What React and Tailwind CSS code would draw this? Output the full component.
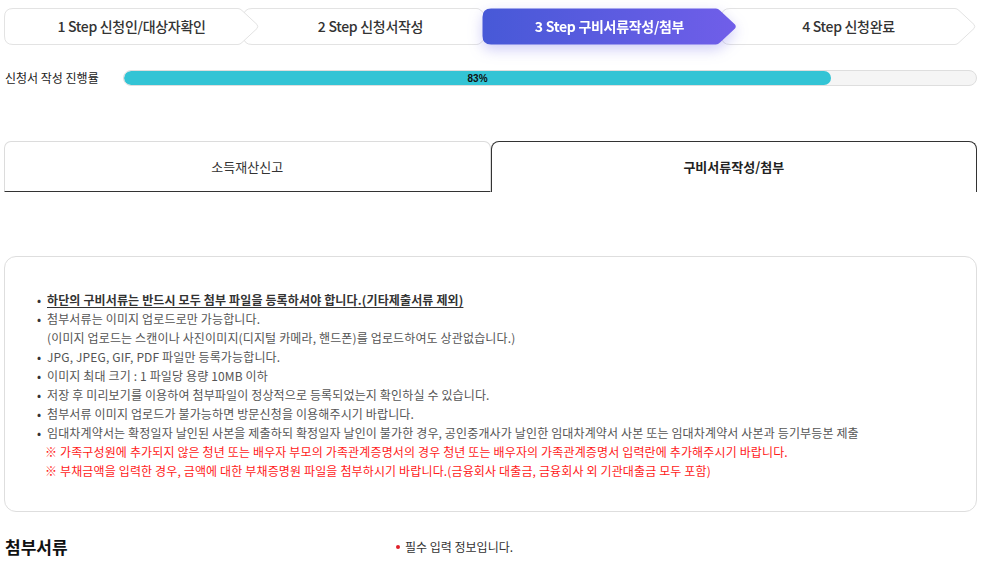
import React from 'react';

const steps = [
  { no: 1, label: '신청인/대상자확인', z: 'z-20' },
  { no: 2, label: '신청서작성', z: 'z-10' },
  { no: 3, label: '구비서류작성/첨부', z: 'z-30', active: true },
  { no: 4, label: '신청완료', z: 'z-0' },
];

const StepShape = ({ active }) => (
  <svg width="255" height="37" viewBox="0 0 255 37" className="absolute inset-0 overflow-visible">
    <defs>
      <linearGradient id="stepGrad" x1="0" y1="0" x2="1" y2="0">
        <stop offset="0%" stopColor="#4759d7" />
        <stop offset="100%" stopColor="#705ee9" />
      </linearGradient>
    </defs>
    <path
      d="M 9 0.5 H 234 Q 236 0.5 238 2.5 L 253 16.5 Q 254.5 18.5 253 20.5 L 238 34.5 Q 236 36.5 234 36.5 H 9 Q 0.5 36.5 0.5 28 V 9 Q 0.5 0.5 9 0.5 Z"
      fill={active ? 'url(#stepGrad)' : '#ffffff'}
      stroke={active ? 'none' : '#e3e3e3'}
      strokeWidth="1"
    />
  </svg>
);

const notes = [
  { text: '하단의 구비서류는 반드시 모두 첨부 파일을 등록하셔야 합니다.(기타제출서류 제외)', strong: true },
  { text: '첨부서류는 이미지 업로드로만 가능합니다.', sub: '(이미지 업로드는 스캔이나 사진이미지(디지털 카메라, 핸드폰)를 업로드하여도 상관없습니다.)' },
  { text: 'JPG, JPEG, GIF, PDF 파일만 등록가능합니다.' },
  { text: '이미지 최대 크기 : 1 파일당 용량 10MB 이하' },
  { text: '저장 후 미리보기를 이용하여 첨부파일이 정상적으로 등록되었는지 확인하실 수 있습니다.' },
  { text: '첨부서류 이미지 업로드가 불가능하면 방문신청을 이용해주시기 바랍니다.' },
  { text: '임대차계약서는 확정일자 날인된 사본을 제출하되 확정일자 날인이 불가한 경우, 공인중개사가 날인한 임대차계약서 사본 또는 임대차계약서 사본과 등기부등본 제출' },
];

const App = () => {
  return (
    <div className="w-[987px] min-h-[569px] bg-white font-['Noto_Sans_CJK_KR','Noto_Sans',sans-serif] text-[#333]">
      {/* steps */}
      <div className="flex pt-[8px] pl-[4px]">
        {steps.map((s, i) => (
          <div key={s.no} className={`relative w-[255px] h-[37px] shrink-0 ${s.z} ${i > 0 ? '-ml-[16px]' : ''} ${s.active ? 'drop-shadow-[0_5px_7px_rgba(95,90,230,0.3)]' : ''}`}>
            <StepShape active={s.active} />
            <div className={`relative flex h-full items-center justify-center text-[14px] tracking-[-0.3px] ${s.active ? 'font-bold text-white' : 'font-medium text-[#333]'}`}>
              {s.no} Step {s.label}
            </div>
          </div>
        ))}
      </div>

      {/* progress */}
      <div className="flex items-center mt-[24px] pl-[5px] pr-[10px]">
        <div className="w-[118px] text-[12px] text-[#222]">신청서 작성 진행률</div>
        <div className="flex-1 h-[16px] rounded-full border border-[#dedede] bg-[#f5f5f5] overflow-hidden">
          <div className="w-[83%] h-full rounded-full bg-[#33c4d5] flex items-center justify-center font-['Liberation_Sans',sans-serif] text-[10px] font-bold text-[#111]">
            83%
          </div>
        </div>
      </div>

      {/* tabs */}
      <div className="flex mt-[54px] px-[4px] pr-[10px] h-[51px]">
        <div className="flex-1 flex items-center justify-center rounded-t-[7px] border-t border-l border-r border-[#dcdcdc] border-b border-b-[#333] text-[13px] text-[#333]">
          소득재산신고
        </div>
        <div className="flex-1 flex items-center justify-center rounded-t-[8px] border-t border-l border-r border-[#333] text-[13px] font-bold text-[#222]">
          구비서류작성/첨부
        </div>
      </div>

      {/* notice box */}
      <div className="mt-[64px] mx-[4px] mr-[10px] rounded-[12px] border border-[#dedede] pt-[33px] pb-[31px] pl-[32px] text-[12px] leading-[19px] tracking-[0.14px] text-[#555]">
        {notes.map((n, i) => (
          <div key={i} className="flex">
            <span className="w-[10px] shrink-0 text-[#333]">•</span>
            <div>
              <div className={n.strong ? 'font-bold text-[#333] underline underline-offset-2' : ''}>{n.text}</div>
              {n.sub && <div>{n.sub}</div>}
            </div>
          </div>
        ))}
        <div className="pl-[8px] text-[#ff1a1a]">※ 가족구성원에 추가되지 않은 청년 또는 배우자 부모의 가족관계증명서의 경우 청년 또는 배우자의 가족관계증명서 입력란에 추가해주시기 바랍니다.</div>
        <div className="pl-[8px] text-[#ff1a1a]">※ 부채금액을 입력한 경우, 금액에 대한 부채증명원 파일을 첨부하시기 바랍니다.(금융회사 대출금, 금융회사 외 기관대출금 모두 포함)</div>
      </div>

      {/* attachments header */}
      <div className="flex items-center mt-[22px] pl-[5px]">
        <h2 className="w-[391px] text-[17px] font-bold text-[#111]">첨부서류</h2>
        <div className="flex items-center text-[12px] text-[#333]">
          <span className="w-[4px] h-[4px] rounded-full bg-[#e0202a] mr-[5px]"></span>
          필수 입력 정보입니다.
        </div>
      </div>
    </div>
  );
};

export default App;
